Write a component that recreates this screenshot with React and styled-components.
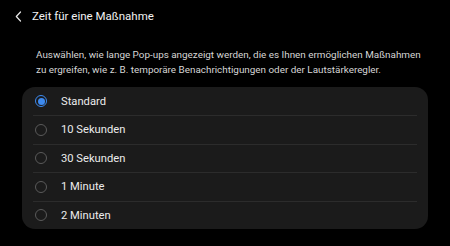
import React, { useState } from "react";
import styled, { createGlobalStyle } from "styled-components";

const GlobalStyle = createGlobalStyle`
  html, body {
    margin: 0;
    padding: 0;
    background: #000;
  }
  body {
    font-family: Roboto, "Noto Sans", sans-serif;
    -webkit-font-smoothing: antialiased;
  }
`;

const Page = styled.div`
  width: 450px;
  height: 246px;
  background: #000;
  color: #f0f0f0;
  overflow: hidden;
`;

const Header = styled.div`
  display: flex;
  align-items: center;
  height: 32px;
  padding-left: 13px;
`;

const BackButton = styled.button`
  display: flex;
  align-items: center;
  justify-content: center;
  width: 10px;
  height: 16px;
  padding: 0;
  margin-right: 9px;
  border: none;
  background: none;
  color: #e8e8e8;
`;

const Title = styled.h1`
  margin: 0;
  font-size: 11.5px;
  font-weight: 400;
  color: #f2f2f2;
`;

const Description = styled.p`
  margin: 14.5px 0 0;
  padding: 0 8px 0 36px;
  font-size: 9.9px;
  line-height: 15px;
  color: #d6d6d6;
`;

const Card = styled.ul`
  list-style: none;
  margin: 10.5px 22px 0 22px;
  padding: 0 11px;
  background: #1b1b1b;
  border-radius: 13px;
`;

const Row = styled.li`
  display: flex;
  align-items: center;
  height: ${({ first }) => (first ? "28px" : "27.5px")};
  border-top: ${({ first }) => (first ? "none" : "1px solid #2c2c2c")};
  cursor: pointer;
`;

const Radio = styled.span`
  box-sizing: border-box;
  width: 12px;
  height: 12px;
  margin-left: 2px;
  margin-right: 14px;
  border-radius: 50%;
  border: 1.3px solid ${({ checked }) => (checked ? "#3d8af0" : "#5a5a5a")};
  display: flex;
  align-items: center;
  justify-content: center;

  &::after {
    content: "";
    width: 7px;
    height: 7px;
    border-radius: 50%;
    background: ${({ checked }) => (checked ? "#3d8af0" : "transparent")};
  }
`;

const Label = styled.span`
  font-size: 11.2px;
  color: #ececec;
`;

const options = ["Standard", "10 Sekunden", "30 Sekunden", "1 Minute", "2 Minuten"];

const App = () => {
  const [selected, setSelected] = useState(0);

  return (
    <Page>
      <GlobalStyle />
      <Header>
        <BackButton aria-label="Zurück">
          <svg width="7" height="11" viewBox="0 0 7 11" fill="none">
            <path d="M5.5 1 L1.3 5.5 L5.5 10" stroke="currentColor" strokeWidth="1.2" strokeLinecap="round" strokeLinejoin="round" />
          </svg>
        </BackButton>
        <Title>Zeit für eine Maßnahme</Title>
      </Header>
      <Description>
        Auswählen, wie lange Pop-ups angezeigt werden, die es Ihnen ermöglichen Maßnahmen
        <br />
        zu ergreifen, wie z. B. temporäre Benachrichtigungen oder der Lautstärkeregler.
      </Description>
      <Card>
        {options.map((opt, i) => (
          <Row key={opt} first={i === 0} onClick={() => setSelected(i)}>
            <Radio checked={selected === i} />
            <Label>{opt}</Label>
          </Row>
        ))}
      </Card>
    </Page>
  );
};

export default App;
